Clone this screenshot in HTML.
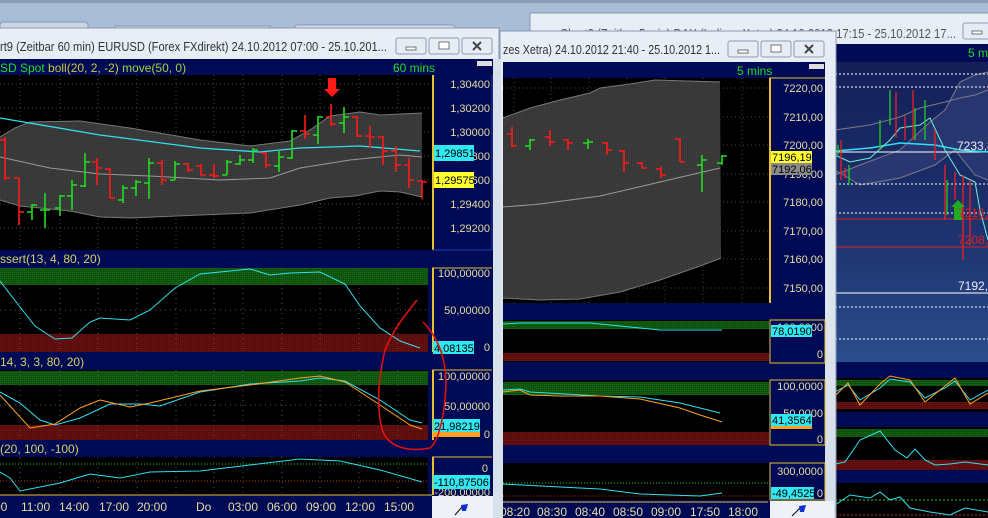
<!DOCTYPE html>
<html><head><meta charset="utf-8"><style>
html,body{margin:0;padding:0;background:#a9bdd6;}
svg{display:block;font-family:"Liberation Sans",sans-serif;}
</style></head><body>
<svg width="988" height="518" viewBox="0 0 988 518" xmlns="http://www.w3.org/2000/svg">
<defs>
<pattern id="dg" width="2" height="2" patternUnits="userSpaceOnUse"><rect width="2" height="2" fill="#0c520c"/><rect width="1" height="1" fill="#1a6a1a"/></pattern>
<pattern id="dr" width="2" height="2" patternUnits="userSpaceOnUse"><rect width="2" height="2" fill="#5a0c0c"/><rect width="1" height="1" fill="#701818"/></pattern>
<pattern id="db" width="2" height="2" patternUnits="userSpaceOnUse"><rect width="2" height="2" fill="#363636"/><rect width="1" height="1" fill="#424242"/></pattern>
<linearGradient id="w3" x1="0" y1="0" x2="0" y2="1"><stop offset="0" stop-color="#141f58"/><stop offset="0.6" stop-color="#1e3470"/><stop offset="1" stop-color="#2b4d8c"/></linearGradient>
<linearGradient id="tb" x1="0" y1="0" x2="0" y2="1"><stop offset="0" stop-color="#e8eef6"/><stop offset="1" stop-color="#d3dde9"/></linearGradient>
</defs>

<rect width="988" height="518" fill="#a9bdd6"/>
<rect x="0" y="0" width="988" height="3" fill="#8a9cb4"/>
<rect x="0" y="22" width="88" height="8" rx="3" fill="#c8d6e6" stroke="#8898b0"/>
<rect x="115" y="26" width="155" height="6" fill="#c8d6e6" stroke="#8898b0"/>
<rect x="295" y="25" width="160" height="6" rx="3" fill="#d0dcea" stroke="#8898b0"/>

<!-- WINDOW 3 -->
<rect x="530" y="13" width="470" height="510" fill="url(#tb)" stroke="#8898b0"/>
<text x="560" y="38" font-size="13" fill="#555" textLength="396" lengthAdjust="spacingAndGlyphs">Chart2 (Zeitbar 5 min)  DAX (Indizes Xetra) 24.10.2012 17:15 - 25.10.2012 17...</text>
<rect x="963" y="23" width="30" height="16" rx="2" fill="#e6ecf4" stroke="#8d9bb0"/>
<rect x="972" y="31" width="10" height="3" fill="#fff" stroke="#555" stroke-width="0.8"/>
<rect x="835" y="44" width="153" height="474" fill="#000a55"/>
<text x="968" y="57" font-size="12" fill="#22dd22">5 mins</text>
<rect x="835" y="62" width="153" height="300" fill="url(#w3)"/>
<path d="M835 175 L860 165 L900 150 L930 122 L945 110 L960 82 L975 75 L988 72 L988 180 L975 175 L955 150 L935 165 L900 178 L880 185 L860 185 L835 170 Z" fill="#2c3b74" opacity="0.8"/>
<path d="M835 175 L860 165 L900 150 L930 122 L945 110 L960 82 L975 75 L988 72" fill="none" stroke="#7a7a8a"/>
<path d="M835 170 L860 185 L900 178 L935 165 L955 150 L975 175 L988 180" fill="none" stroke="#7a7a8a"/>
<path d="M835 130 L870 125 L900 117 L920 108 L945 102 L960 98 L975 95 L988 90" fill="none" stroke="#7a7a8a"/>
<g stroke="#fff" stroke-dasharray="2,2" stroke-width="1"><path d="M835 74H988M835 87H988M835 184H988M835 213H988M835 307H988M835 339H988"/></g>
<path d="M835 152H988M835 293H988" stroke="#fff"/>
<path d="M835 219H988M835 247H988" stroke="#e02020"/>
<path d="M835 151 L870 148 L900 143 L935 145 L960 150 L988 152" fill="none" stroke="#30e0f0" stroke-width="1.5"/>
<path d="M835 155 L850 162 L870 158 L890 140 L900 128 L920 125 L930 118 L945 150 L960 175 L975 182 L980 210 L988 240" fill="none" stroke="#70f0d0"/>
<g stroke="#22cc22" stroke-width="1.3"><path d="M838 145V155M849 165V185M880 120V150M890 90V125M915 108V140M925 100V140M947 180V215"/></g>
<g stroke="#ee2020" stroke-width="1.3"><path d="M841 140V180M845 168V178M896 92V138M905 115V140M913 90V140M935 130V160M945 165V220M955 172V200M963 175V260M970 180V245"/></g>
<path d="M958 200 L965 207 L962 207 L962 220 L954 220 L954 207 L951 207 Z" fill="#22aa22"/>
<g font-size="12"><text x="957" y="150" fill="#eef">7233,8</text><text x="958" y="217" fill="#e02020">7216,4</text><text x="958" y="244" fill="#e02020">7208,2</text><text x="958" y="290" fill="#eef">7192,9</text></g>
<rect x="835" y="362" width="153" height="156" fill="#000a55"/>
<rect x="835" y="378" width="153" height="34" fill="#000"/>
<rect x="835" y="380" width="153" height="6" fill="url(#dg)"/>
<rect x="835" y="402" width="153" height="7" fill="url(#dr)"/>
<path d="M835 392 L848 385 L860 400 L880 388 L890 379 L910 382 L925 398 L945 388 L955 381 L970 400 L988 390" fill="none" stroke="#30e0f0"/>
<path d="M835 396 L848 383 L860 405 L880 384 L890 376 L910 380 L925 402 L945 386 L955 378 L970 404 L988 393" fill="none" stroke="#ffa020"/>
<rect x="835" y="427" width="153" height="43" fill="#000"/>
<rect x="835" y="429" width="153" height="8" fill="url(#dg)"/>
<rect x="835" y="460" width="153" height="10" fill="url(#dr)"/>
<path d="M835 464 L845 462 L860 440 L880 431 L895 450 L907 458 L915 449 L925 460 L935 465 L950 464 L965 462 L988 465" fill="none" stroke="#30e0f0"/>
<rect x="835" y="483" width="153" height="35" fill="#000"/>
<path d="M835 500H988" stroke="#22cc22" stroke-dasharray="2,2"/>
<path d="M835 515H988" stroke="#cc2222" stroke-dasharray="2,2"/>
<path d="M835 505 L850 495 L870 498 L880 492 L890 500 L900 497 L910 508 L930 512 L950 515 L965 508 L988 512" fill="none" stroke="#30e0f0"/>

<!-- WINDOW 2 -->
<rect x="500" y="31" width="336" height="490" fill="url(#tb)" stroke="#8898b0"/>
<text x="503" y="54" font-size="13" fill="#333" textLength="217" lengthAdjust="spacingAndGlyphs">zes Xetra) 24.10.2012 21:40 - 25.10.2012 1...</text>
<g fill="#e6ecf4" stroke="#8d9bb0"><rect x="728" y="41" width="30" height="16" rx="2"/><rect x="761" y="41" width="30" height="16" rx="2"/><rect x="794" y="41" width="30" height="16" rx="2"/></g>
<rect x="738" y="50" width="10" height="3" fill="#fff" stroke="#555" stroke-width="0.8"/>
<rect x="771" y="45" width="10" height="7" fill="#fff" stroke="#555" stroke-width="0.8"/>
<path d="M805 45 L813 53 M813 45 L805 53" stroke="#444" stroke-width="2"/>
<rect x="503" y="62" width="322" height="456" fill="#000a55"/>
<text x="737" y="75" font-size="12" fill="#22dd22">5 mins</text>
<rect x="809" y="64" width="15" height="5" fill="#ddd"/>
<rect x="503" y="78" width="266" height="225" fill="#000"/>
<g stroke="#444" stroke-dasharray="1,3"><path d="M514 78V303M551 78V303M589 78V303M627 78V303M665 78V303M703 78V303M742 78V303M503 88H768M503 117H768M503 145H768M503 174H768M503 202H768M503 231H768M503 259H768M503 288H768"/></g>
<path d="M503 118 L530 108 L560 100 L590 93 L600 88 L630 84 L655 80 L720 82 L721 258 L700 266 L660 280 L620 292 L580 299 L540 300 L503 298 Z" fill="url(#db)"/>
<path d="M503 118 L530 108 L560 100 L590 93 L600 88 L630 84 L655 80 L720 82" fill="none" stroke="#777"/>
<path d="M721 258 L700 266 L660 280 L620 292 L580 299 L540 300 L503 298" fill="none" stroke="#777"/>
<path d="M503 207 L540 204 L600 196 L660 182 L720 168" fill="none" stroke="#999"/>
<g stroke="#ff1a1a" stroke-width="1.6" fill="none">
<path d="M512 127V147M507 134H512M512 146H517"/><path d="M550 130V146M545 137H550M550 142H555"/><path d="M568 139V150M563 140H568M568 143H573"/><path d="M607 142V155M602 143H607M607 150H612"/><path d="M624 150V172M619 151H624M624 163H629"/><path d="M642 162V168M637 163H642M642 168H647"/><path d="M661 166V178M656 169H661M661 175H666"/><path d="M680 138V162M675 139H680M680 162H685"/>
</g>
<g stroke="#22dd22" stroke-width="1.6" fill="none">
<path d="M530 139V150M525 146H530M530 140H535"/><path d="M588 139V149M583 143H588M588 142H593"/><path d="M702 155V192M697 165H702M702 160H707"/><path d="M722 155V165M717 163H722M722 156H727"/>
</g>
<rect x="769" y="78" width="56" height="225" fill="#000a55"/>
<path d="M770 78V303" stroke="#e8c030" stroke-width="2"/>
<path d="M769 78H825" stroke="#e8c030"/>
<g font-size="11" fill="#e8dca0" text-anchor="end"><text x="823" y="92">7220,00</text><text x="823" y="121">7210,00</text><text x="823" y="149">7200,00</text><text x="823" y="178">7190,00</text><text x="823" y="206">7180,00</text><text x="823" y="235">7170,00</text><text x="823" y="263">7160,00</text><text x="823" y="292">7150,00</text></g>
<rect x="771" y="151" width="41" height="12" fill="#ffff30"/><text x="772" y="161" font-size="11" fill="#000">7196,19</text>
<rect x="771" y="163" width="41" height="12" fill="#8a8a8a"/><text x="772" y="173" font-size="11" fill="#000">7192,06</text>
<rect x="503" y="320" width="266" height="42" fill="#000"/>
<rect x="503" y="321" width="266" height="8" fill="url(#dg)"/>
<rect x="503" y="353" width="266" height="8" fill="url(#dr)"/>
<path d="M503 324 L520 323 L590 323 L620 326 L660 330 L722 330" fill="none" stroke="#30e0f0"/>
<rect x="770" y="320" width="55" height="43" fill="#000a55" stroke="#e8c030"/>
<text x="823" y="331" font-size="11" fill="#e8dca0" text-anchor="end">100,0000</text>
<text x="823" y="358" font-size="11" fill="#e8dca0" text-anchor="end">0</text>
<rect x="771" y="325" width="41" height="12" fill="#30e8f0"/><text x="772" y="335" font-size="11" fill="#000">78,0190</text>
<rect x="503" y="380" width="266" height="65" fill="#000"/>
<rect x="503" y="382" width="266" height="13" fill="url(#dg)"/>
<rect x="503" y="432" width="266" height="13" fill="url(#dr)"/>
<path d="M503 390 L520 389 L530 392 L600 396 L640 397 L680 403 L720 413" fill="none" stroke="#30e0f0"/>
<path d="M503 392 L520 390 L530 395 L560 396 L600 396 L640 399 L680 408 L700 415 L722 422" fill="none" stroke="#ffa020"/>
<rect x="770" y="380" width="55" height="65" fill="#000a55" stroke="#e8c030"/>
<text x="823" y="390" font-size="11" fill="#e8dca0" text-anchor="end">100,0000</text>
<text x="823" y="417" font-size="11" fill="#e8dca0" text-anchor="end">50,0000</text>
<text x="823" y="443" font-size="11" fill="#e8dca0" text-anchor="end">0</text>
<rect x="771" y="426" width="41" height="3" fill="#ffa020"/>
<rect x="771" y="414" width="41" height="12" fill="#30e8f0"/><text x="772" y="424" font-size="11" fill="#000">41,3564</text>
<rect x="503" y="463" width="266" height="37" fill="#000"/>
<path d="M503 483H768" stroke="#22cc22" stroke-dasharray="1,2"/>
<path d="M503 496H768" stroke="#cc2222" stroke-dasharray="1,2"/>
<path d="M503 484 L560 487 L600 489 L640 494 L700 496 L722 493" fill="none" stroke="#30e0f0"/>
<rect x="770" y="463" width="55" height="37" fill="#000a55" stroke="#e8c030"/>
<text x="823" y="475" font-size="11" fill="#e8dca0" text-anchor="end">300,0000</text>
<text x="823" y="497" font-size="11" fill="#e8dca0" text-anchor="end">0</text>
<rect x="771" y="487" width="43" height="12" fill="#30e8f0"/><text x="772" y="497" font-size="11" fill="#000">-49,4525</text>
<path d="M503 502H768" stroke="#e8c030"/>
<g font-size="12" fill="#e8dca0"><text x="500" y="516">08:20</text><text x="537" y="516">08:30</text><text x="575" y="516">08:40</text><text x="613" y="516">08:50</text><text x="651" y="516">09:00</text><text x="690" y="516">17:50</text><text x="728" y="516">18:00</text></g>
<rect x="770" y="501" width="64" height="17" fill="#eef2f8"/>
<path d="M792 516 L800 508" stroke="#000"/><path d="M799 506 L806 505 L804 512 L800 512 Z" fill="#1030d0"/>

<!-- WINDOW 1 -->
<rect x="-5" y="28" width="504" height="495" fill="url(#tb)" stroke="#8898b0"/>
<text x="0" y="51" font-size="13" fill="#333" textLength="387" lengthAdjust="spacingAndGlyphs">rt9 (Zeitbar 60 min)  EURUSD (Forex FXdirekt) 24.10.2012 07:00 - 25.10.201...</text>
<g fill="#e6ecf4" stroke="#8d9bb0"><rect x="396" y="38" width="30" height="16" rx="2"/><rect x="429" y="38" width="30" height="16" rx="2"/><rect x="462" y="38" width="30" height="16" rx="2"/></g>
<rect x="406" y="47" width="10" height="3" fill="#fff" stroke="#555" stroke-width="0.8"/>
<rect x="439" y="42" width="10" height="7" fill="#fff" stroke="#555" stroke-width="0.8"/>
<path d="M473 42 L481 50 M481 42 L473 50" stroke="#444" stroke-width="2"/>
<rect x="0" y="59" width="493" height="459" fill="#000a55"/>
<text x="0" y="72" font-size="12"><tspan fill="#22dd22">SD Spot </tspan><tspan fill="#c8c840">boll(20, 2, -2) </tspan><tspan fill="#a0d040">move(50, 0)</tspan></text>
<text x="393" y="72" font-size="12" fill="#22dd22">60 mins</text>
<rect x="477" y="61" width="15" height="5" fill="#ddd"/>
<rect x="0" y="75" width="432" height="175" fill="#000"/>
<g stroke="#444" stroke-dasharray="1,3"><path d="M20 75V250M60 75V250M98 75V250M137 75V250M176 75V250M214 75V250M243 75V250M282 75V250M320 75V250M359 75V250M398 75V250M0 84H430M0 108H430M0 132H430M0 156H430M0 180H430M0 204H430M0 228H430"/></g>
<path d="M0 137 L15 128 L30 122 L80 121 L130 128 L200 140 L250 146 L290 141 L310 130 L330 116 L360 112 L380 115 L422 113 L422 197 L400 192 L380 191 L355 196 L330 198 L300 205 L250 213 L200 215 L130 218 L100 217 L70 211 L20 206 L0 200 Z" fill="url(#db)"/>
<path d="M0 137 L15 128 L30 122 L80 121 L130 128 L200 140 L250 146 L290 141 L310 130 L330 116 L360 112 L380 115 L422 113" fill="none" stroke="#777"/>
<path d="M422 197 L400 192 L380 191 L355 196 L330 198 L300 205 L250 213 L200 215 L130 218 L100 217 L70 211 L20 206 L0 200" fill="none" stroke="#777"/>
<path d="M0 157 L50 168 L100 174 L150 176 L220 180 L270 178 L300 168 L350 160 L400 155 L422 157" fill="none" stroke="#999"/>
<path d="M0 118 L100 135 L200 148 L260 152 L300 148 L360 146 L420 151" fill="none" stroke="#30e0f0" stroke-width="1.3"/>
<g stroke="#ff1a1a" stroke-width="1.6" fill="none">
<path d="M5 137V180M0 140H5M5 178H10"/><path d="M19 178V225M14 178H19M19 212H24"/><path d="M97 158V185M92 162H97M97 168H102"/><path d="M110 168V198M105 169H110M110 198H115"/><path d="M162 160V185M157 163H162M162 180H167"/><path d="M188 163V172M183 164H188M188 170H193"/><path d="M201 164V176M196 166H201M201 175H206"/><path d="M214 164V178M209 175H214M214 176H219"/><path d="M266 152V168M261 153H266M266 165H271"/><path d="M305 115V139M300 131H305M305 134H310"/><path d="M331 104V126M326 117H331M331 124H336"/><path d="M357 116V137M352 117H357M357 136H362"/><path d="M370 126V148M365 136H370M370 137H375"/><path d="M383 136V165M378 137H383M383 151H388"/><path d="M396 146V172M391 151H396M396 165H401"/><path d="M409 158V188M404 165H409M409 180H414"/><path d="M422 180V199M417 181H422M422 182H427"/>
</g>
<g stroke="#22dd22" stroke-width="1.6" fill="none">
<path d="M32 204V220M27 212H32M32 205H37"/><path d="M45 193V228M40 210H45M45 210H50"/><path d="M60 195V216M55 208H60M60 196H65"/><path d="M72 180V210M67 196H72M72 185H77"/><path d="M85 153V187M80 186H85M85 162H90"/><path d="M123 185V203M118 200H123M123 188H128"/><path d="M136 180V196M131 188H136M136 182H141"/><path d="M149 158V199M144 183H149M149 163H154"/><path d="M175 161V180M170 180H175M175 164H180"/><path d="M227 160V175M222 175H227M227 162H232"/><path d="M240 155V165M235 164H240M240 160H245"/><path d="M253 148V163M248 160H253M253 150H258"/><path d="M279 151V172M274 166H279M279 157H284"/><path d="M292 130V159M287 158H292M292 131H297"/><path d="M318 116V144M313 135H318M318 117H323"/><path d="M344 107V133M339 123H344M344 117H349"/>
</g>
<path d="M328 78H336V89H340L332 97L324 89H328Z" fill="#ff1a1a"/>
<rect x="432" y="75" width="60" height="175" fill="#000a55"/>
<path d="M433 75V250" stroke="#e8c030" stroke-width="2"/>
<path d="M432 250H492M492 75V250" stroke="#2040b0"/>
<g font-size="11" fill="#e8dca0" text-anchor="end"><text x="490" y="88">1,30400</text><text x="490" y="112">1,30200</text><text x="490" y="136">1,30000</text><text x="490" y="160">1,29800</text><text x="490" y="184">1,29600</text><text x="490" y="208">1,29400</text><text x="490" y="232">1,29200</text></g>
<rect x="434" y="145" width="40" height="16" fill="#30e8f0"/><text x="435" y="157" font-size="11" fill="#000">1,29851</text>
<rect x="434" y="172" width="40" height="16" fill="#ffff30"/><text x="435" y="184" font-size="11" fill="#000">1,29575</text>
<text x="0" y="263" font-size="12" fill="#d8d060">ssert(13, 4, 80, 20)</text>
<rect x="0" y="268" width="428" height="84" fill="#000"/>
<rect x="0" y="268" width="428" height="17" fill="url(#dg)"/>
<rect x="0" y="334" width="428" height="18" fill="url(#dr)"/>
<g stroke="#555" stroke-dasharray="1,4"><path d="M20 268V352M60 268V352M98 268V352M137 268V352M176 268V352M214 268V352M243 268V352M282 268V352M320 268V352M359 268V352M398 268V352M0 310H428"/></g>
<path d="M0 281 L20 307 L35 326 L55 339 L72 338 L90 322 L100 318 L130 320 L150 310 L175 288 L200 274 L250 269 L270 275 L290 273 L320 272 L345 284 L360 306 L380 328 L400 341 L420 348" fill="none" stroke="#30e0f0"/>
<rect x="432" y="268" width="60" height="84" fill="#000a55"/>
<path d="M433 268V352" stroke="#e8c030" stroke-width="2"/><path d="M432 268H492" stroke="#e8c030"/>
<text x="490" y="277" font-size="11" fill="#e8dca0" text-anchor="end">100,00000</text>
<text x="490" y="314" font-size="11" fill="#e8dca0" text-anchor="end">50,00000</text>
<text x="490" y="351" font-size="11" fill="#e8dca0" text-anchor="end">0</text>
<rect x="433" y="341" width="41" height="13" fill="#30e8f0"/><text x="434" y="352" font-size="11" fill="#000">4,08135</text>
<text x="0" y="366" font-size="12" fill="#d8d060">14, 3, 3, 80, 20)</text>
<rect x="0" y="370" width="428" height="70" fill="#000"/>
<rect x="0" y="371" width="428" height="14" fill="url(#dg)"/>
<rect x="0" y="425" width="428" height="15" fill="url(#dr)"/>
<g stroke="#555" stroke-dasharray="1,4"><path d="M20 370V440M60 370V440M98 370V440M137 370V440M176 370V440M214 370V440M243 370V440M282 370V440M320 370V440M359 370V440M398 370V440M0 405H428"/></g>
<path d="M0 392 L20 403 L40 420 L55 425 L80 418 L110 404 L140 404 L160 406 L200 392 L250 384 L300 381 L320 378 L345 381 L380 400 L410 420 L422 423" fill="none" stroke="#30e0f0"/>
<path d="M0 395 L30 428 L55 424 L80 408 L100 400 L130 407 L150 403 L200 391 L250 385 L300 378 L320 376 L345 382 L380 405 L410 425 L422 429" fill="none" stroke="#ffa020"/>
<rect x="432" y="370" width="60" height="70" fill="#000a55"/>
<path d="M433 370V440" stroke="#e8c030" stroke-width="2"/><path d="M432 370H492" stroke="#e8c030"/>
<text x="490" y="380" font-size="11" fill="#e8dca0" text-anchor="end">100,00000</text>
<text x="490" y="410" font-size="11" fill="#e8dca0" text-anchor="end">50,00000</text>
<text x="490" y="438" font-size="11" fill="#e8dca0" text-anchor="end">0</text>
<rect x="433" y="431" width="47" height="6" fill="#ffa020"/>
<rect x="433" y="419" width="47" height="13" fill="#30e8f0"/><text x="434" y="430" font-size="11" fill="#000">21,98219</text>
<text x="0" y="453" font-size="12" fill="#d8d060">(20, 100, -100)</text>
<rect x="0" y="457" width="428" height="38" fill="#000"/>
<path d="M0 464H428" stroke="#22cc22" stroke-dasharray="1,2"/>
<path d="M0 481H428" stroke="#cc2222" stroke-dasharray="1,2"/>
<g stroke="#555" stroke-dasharray="1,4"><path d="M20 457V495M60 457V495M98 457V495M137 457V495M176 457V495M214 457V495M243 457V495M282 457V495M320 457V495M359 457V495M398 457V495"/></g>
<path d="M0 472 L10 478 L20 491 L60 483 L90 474 L120 478 L150 472 L200 471 L250 465 L300 459 L340 461 L380 470 L422 482" fill="none" stroke="#30e0f0"/>
<rect x="432" y="457" width="60" height="38" fill="#000a55"/>
<path d="M433 457V495" stroke="#e8c030" stroke-width="2"/><path d="M432 457H492" stroke="#e8c030"/>
<text x="488" y="472" font-size="11" fill="#e8dca0" text-anchor="end">0</text>
<text x="490" y="496" font-size="11" fill="#e8dca0" text-anchor="end">-200,00000</text>
<rect x="433" y="475" width="57" height="14" fill="#30e8f0"/><text x="434" y="486" font-size="11" fill="#000">-110,87506</text>
<path d="M0 495H432" stroke="#e8c030"/>
<g font-size="12" fill="#e8dca0"><text x="-6" y="511">00</text><text x="21" y="511">11:00</text><text x="59" y="511">14:00</text><text x="99" y="511">17:00</text><text x="137" y="511">20:00</text><text x="196" y="511">Do</text><text x="228" y="511">03:00</text><text x="267" y="511">06:00</text><text x="306" y="511">09:00</text><text x="345" y="511">12:00</text><text x="384" y="511">15:00</text></g>
<rect x="432" y="496" width="61" height="22" fill="#eef2f8"/>
<path d="M455 515 L462 507" stroke="#000"/><path d="M461 505 L468 504 L466 511 L462 511 Z" fill="#1030d0"/>
<rect x="493" y="59" width="8" height="459" fill="#d7e1ec"/>

<path d="M417 300 C405 315 393 330 385 350 C378 380 376 410 383 432 C390 448 410 452 430 448 C440 440 445 410 446 385 C446 360 440 340 423 322" fill="none" stroke="#e01010" stroke-width="1.6"/>
</svg>
</body></html>
